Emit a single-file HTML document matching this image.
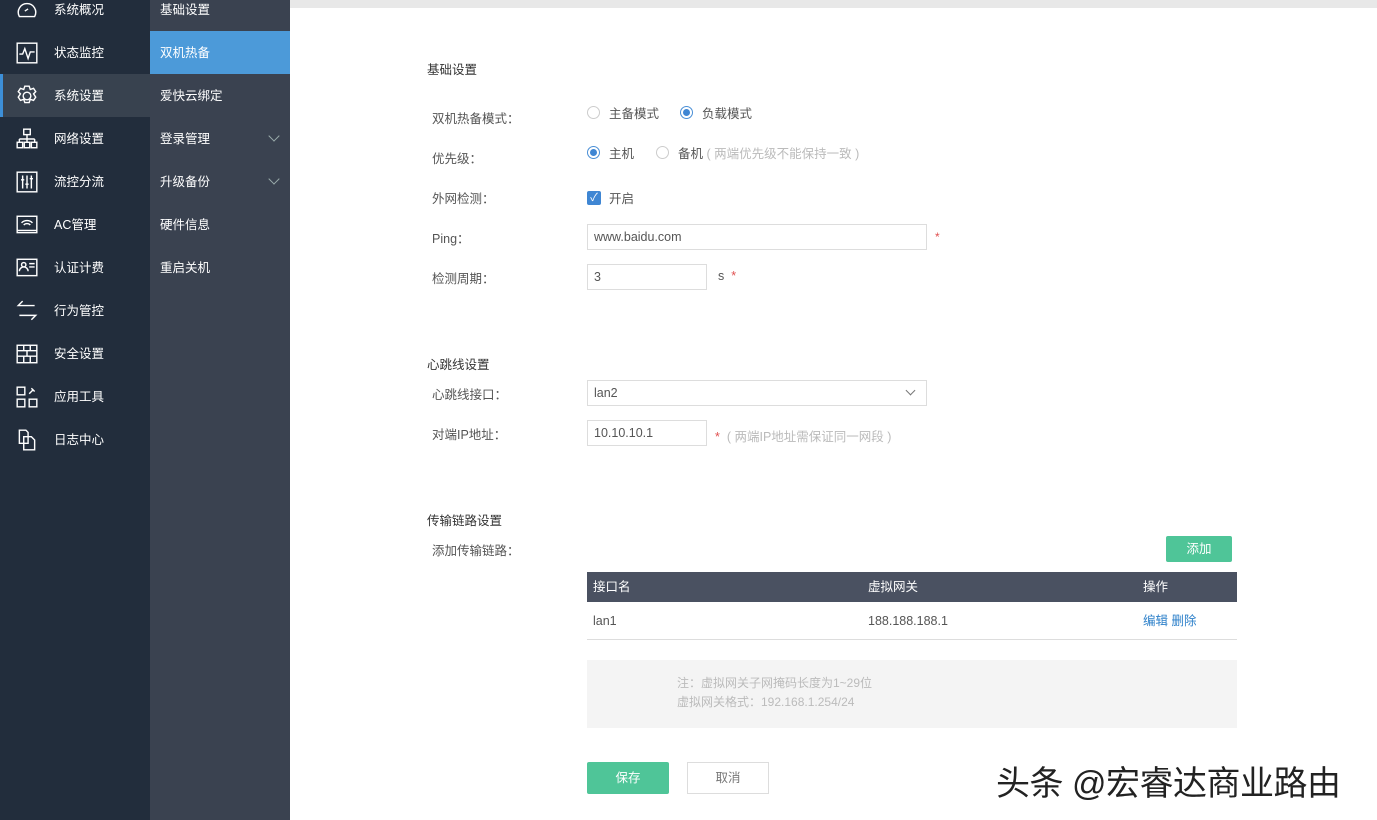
<!DOCTYPE html>
<html><head><meta charset="utf-8"><style>
*{margin:0;padding:0;box-sizing:border-box}
body{width:1377px;height:820px;overflow:hidden;background:#fff;font-family:"Liberation Sans","Noto Sans CJK SC",sans-serif;font-size:12px;color:#555;position:relative}
.s1{position:absolute;left:0;top:0;width:150px;height:820px;background:#222d3c}
.s2{position:absolute;left:150px;top:0;width:140px;height:820px;background:#3a4250}
.it{position:absolute;left:0;width:150px;height:43px;color:#fff;font-size:12.5px;line-height:45px}
.it span{position:absolute;left:54px}
.it svg{position:absolute;left:15px;top:10px}
.act{background:#38424f}
.act:before{content:"";position:absolute;left:0;top:0;width:3px;height:43px;background:#3d8fd8}
.sub{position:absolute;left:150px;width:140px;height:43px;color:#fff;font-size:12.5px;line-height:45px;padding-left:10px}
.sub.on{background:#4c9ad9}
.chev{position:absolute;right:12px;top:15px;width:8px;height:8px;border-right:1px solid #9aa;border-bottom:1px solid #9aa;transform:rotate(45deg)}
.top{position:absolute;left:290px;top:0;right:0;height:8px;background:#e8e8e8}
.a{position:absolute;white-space:nowrap}
.h{font-size:12.5px;color:#333}
.lab{font-size:12.5px;color:#555}
.inp{position:absolute;border:1px solid #ddd;height:26px;line-height:24px;padding-left:6px;font-size:12.5px;color:#555}
.rd{position:absolute;width:13px;height:13px;border:1px solid #ccc;border-radius:50%}
.rd.on{border-color:#4a8fd6}
.rd.on:after{content:"";position:absolute;left:2px;top:2px;width:7px;height:7px;border-radius:50%;background:#3f86d3}
.red{color:#e05050}
.gray{color:#bbb}
</style></head><body>
<div class="s1">
<div class="it" style="top:-12px"><svg width="24" height="24" viewBox="0 0 22 22" fill="none" stroke="#fff" stroke-width="1.3"><path d="M4 17A8 8 0 1 1 18 17Z"/><path d="M9 12l3-2"/></svg><span>系统概况</span></div>
<div class="it" style="top:31px"><svg width="24" height="24" viewBox="0 0 22 22" fill="none" stroke="#fff" stroke-width="1.3"><rect x="2" y="2" width="18" height="18"/><path d="M4 12h3l2-5 3 9 2-6h4"/></svg><span>状态监控</span></div>
<div class="it act" style="top:74px"><svg width="24" height="24" viewBox="0 0 22 22" fill="none" stroke="#fff" stroke-width="1.3"><circle cx="11" cy="11" r="3.5"/><path d="M9 2h4l1 3 3-1 2 3-2 2 2 3-2 3-3-1-1 3H9l-1-3-3 1-2-3 2-3-2-2 2-3 3 1z"/></svg><span>系统设置</span></div>
<div class="it" style="top:117px"><svg width="24" height="24" viewBox="0 0 22 22" fill="none" stroke="#fff" stroke-width="1.3"><rect x="8" y="2" width="6" height="5"/><path d="M11 7v4M4 11h14M4 11v3M11 11v3M18 11v3"/><rect x="2" y="14" width="5" height="5"/><rect x="8.5" y="14" width="5" height="5"/><rect x="15" y="14" width="5" height="5"/></svg><span>网络设置</span></div>
<div class="it" style="top:160px"><svg width="24" height="24" viewBox="0 0 22 22" fill="none" stroke="#fff" stroke-width="1.3"><rect x="2" y="2" width="18" height="18"/><path d="M7 5v12M11 5v12M15 5v12M5.5 9h3M9.5 13h3M13.5 8h3"/></svg><span>流控分流</span></div>
<div class="it" style="top:203px"><svg width="24" height="24" viewBox="0 0 22 22" fill="none" stroke="#fff" stroke-width="1.3"><rect x="2" y="3" width="18" height="15"/><path d="M6 9a7 7 0 0 1 10 0M8 11a4 4 0 0 1 6 0M2 16h18"/></svg><span>AC管理</span></div>
<div class="it" style="top:246px"><svg width="24" height="24" viewBox="0 0 22 22" fill="none" stroke="#fff" stroke-width="1.3"><rect x="2" y="3" width="18" height="15"/><circle cx="8" cy="8" r="2"/><path d="M4 14a4 4 0 0 1 8 0M13 7h5M13 10h5"/></svg><span>认证计费</span></div>
<div class="it" style="top:289px"><svg width="24" height="24" viewBox="0 0 22 22" fill="none" stroke="#fff" stroke-width="1.3"><path d="M18 6H3l4-4M4 15h15l-4 4"/></svg><span>行为管控</span></div>
<div class="it" style="top:332px"><svg width="24" height="24" viewBox="0 0 22 22" fill="none" stroke="#fff" stroke-width="1.3"><rect x="2" y="3" width="18" height="16"/><path d="M2 8h18M2 13h18M8 3v5M14 3v5M11 8v5M8 13v6M14 13v6"/></svg><span>安全设置</span></div>
<div class="it" style="top:375px"><svg width="24" height="24" viewBox="0 0 22 22" fill="none" stroke="#fff" stroke-width="1.3"><rect x="2" y="2" width="7" height="7"/><rect x="2" y="13" width="7" height="7"/><rect x="13" y="13" width="7" height="7"/><path d="M13 8l4-4M15 3l3 3"/></svg><span>应用工具</span></div>
<div class="it" style="top:418px"><svg width="24" height="24" viewBox="0 0 22 22" fill="none" stroke="#fff" stroke-width="1.3"><path d="M4 2h6l2 2v10H4z"/><path d="M8 8h7l3 3v9H8z"/></svg><span>日志中心</span></div>
</div>
<div class="s2"></div>
<div class="sub" style="top:-12px">基础设置</div>
<div class="sub on" style="top:31px">双机热备</div>
<div class="sub" style="top:74px">爱快云绑定</div>
<div class="sub" style="top:117px">登录管理<i class="chev"></i></div>
<div class="sub" style="top:160px">升级备份<i class="chev"></i></div>
<div class="sub" style="top:203px">硬件信息</div>
<div class="sub" style="top:246px">重启关机</div>
<div class="top"></div>

<div class="a h" style="left:427px;top:59px">基础设置</div>
<div class="a lab" style="left:432px;top:108px">双机热备模式：</div>
<div class="rd" style="left:587px;top:106px"></div><div class="a lab" style="left:609px;top:103px">主备模式</div>
<div class="rd on" style="left:680px;top:106px"></div><div class="a lab" style="left:702px;top:103px">负载模式</div>
<div class="a lab" style="left:432px;top:148px">优先级：</div>
<div class="rd on" style="left:587px;top:146px"></div><div class="a lab" style="left:609px;top:143px">主机</div>
<div class="rd" style="left:656px;top:146px"></div><div class="a lab" style="left:678px;top:143px">备机 <span class="gray">( 两端优先级不能保持一致 )</span></div>
<div class="a lab" style="left:432px;top:188px">外网检测：</div>
<div class="a" style="left:587px;top:191px;width:14px;height:14px;background:#3f86d3;border-radius:2px;color:#fff;font-size:11px;line-height:14px;text-align:center">✓</div>
<div class="a lab" style="left:609px;top:188px">开启</div>
<div class="a lab" style="left:432px;top:228px">Ping：</div>
<div class="inp" style="left:587px;top:224px;width:340px">www.baidu.com</div><div class="a red" style="left:935px;top:230px">*</div>
<div class="a lab" style="left:432px;top:268px">检测周期：</div>
<div class="inp" style="left:587px;top:264px;width:120px">3</div><div class="a lab" style="left:718px;top:269px">s <span class="red">&nbsp;*</span></div>

<div class="a h" style="left:427px;top:354px">心跳线设置</div>
<div class="a lab" style="left:432px;top:384px">心跳线接口：</div>
<div class="inp" style="left:587px;top:380px;width:340px">lan2<i style="position:absolute;right:12px;top:6px;width:7px;height:7px;border-right:1px solid #777;border-bottom:1px solid #777;transform:rotate(45deg)"></i></div>
<div class="a lab" style="left:432px;top:424px">对端IP地址：</div>
<div class="inp" style="left:587px;top:420px;width:120px">10.10.10.1</div><div class="a lab" style="left:715px;top:426px"><span class="red">*</span> <span class="gray">&nbsp;( 两端IP地址需保证同一网段 )</span></div>

<div class="a h" style="left:427px;top:510px">传输链路设置</div>
<div class="a lab" style="left:432px;top:540px">添加传输链路：</div>
<div class="a" style="left:1166px;top:536px;width:66px;height:26px;background:#4fc598;border-radius:2px;color:#fff;font-size:12.5px;line-height:26px;text-align:center">添加</div>
<div class="a" style="left:587px;top:572px;width:650px;height:30px;background:#4a5161;color:#fff;font-size:12.5px;line-height:30px">
<span class="a" style="left:6px">接口名</span><span class="a" style="left:281px">虚拟网关</span><span class="a" style="left:556px">操作</span></div>
<div class="a" style="left:587px;top:602px;width:650px;height:38px;border-bottom:1px solid #ddd;font-size:12.5px;line-height:38px;color:#555">
<span class="a" style="left:6px">lan1</span><span class="a" style="left:281px">188.188.188.1</span><span class="a" style="left:556px;color:#2b7fc9">编辑 删除</span></div>
<div class="a" style="left:587px;top:660px;width:650px;height:68px;background:#f4f4f4;color:#bbb;font-size:12px;line-height:19px;padding:14px 0 0 90px">注：虚拟网关子网掩码长度为1~29位<br>虚拟网关格式：192.168.1.254/24</div>
<div class="a" style="left:587px;top:762px;width:82px;height:32px;background:#4fc598;border-radius:2px;color:#fff;font-size:12.5px;line-height:32px;text-align:center">保存</div>
<div class="a" style="left:687px;top:762px;width:82px;height:32px;border:1px solid #ddd;color:#777;font-size:12.5px;line-height:30px;text-align:center">取消</div>
<div class="a" style="left:996px;top:756px;font-size:34px;letter-spacing:-0.5px;color:#222;text-shadow:1px 1px 0 #fff,-1px -1px 0 #fff">头条 @宏睿达商业路由</div>
</body></html>
